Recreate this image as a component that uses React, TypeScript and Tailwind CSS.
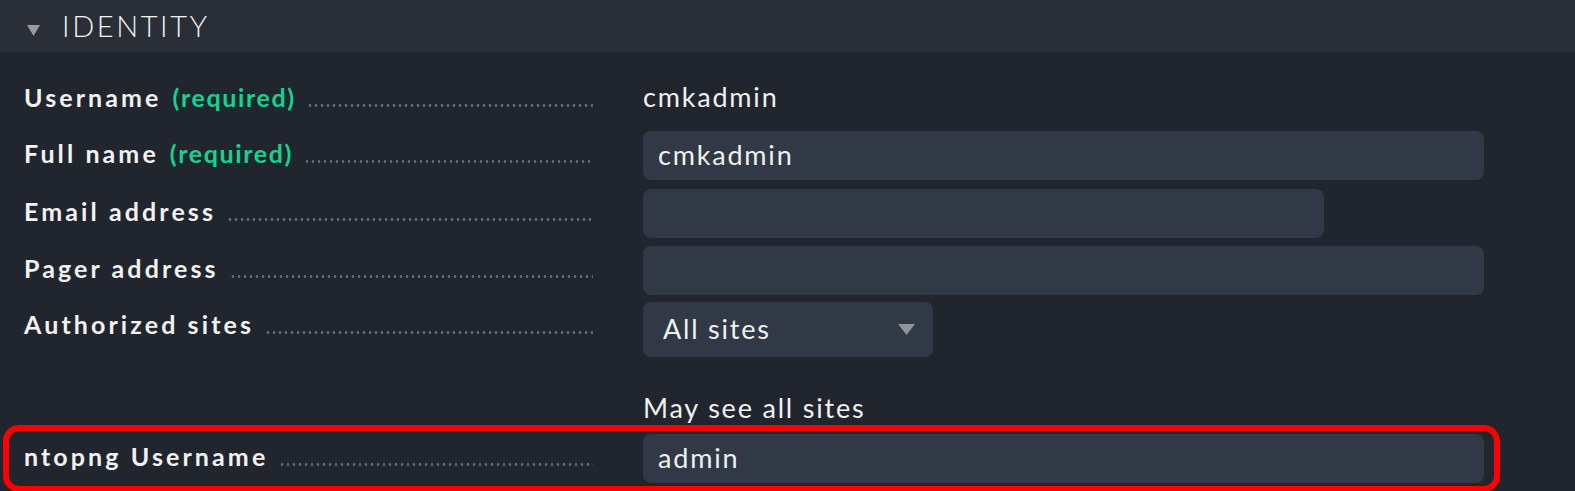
const DOTS =
  "flex-1 h-[3px] mt-[15px] ml-[11px] bg-[radial-gradient(circle,#60666f_1.2px,transparent_1.7px)] bg-[length:6px_3px] bg-repeat-x";

interface LabelProps {
  label: string;
  required?: boolean;
  indent?: string;
}

const Label = ({ label, required, indent = "pl-[24px] w-[643px]" }: LabelProps) => (
  <div className={`flex items-center h-[46px] pr-[50px] shrink-0 ${indent}`}>
    <span className="text-[25px] font-bold tracking-[3.1px] text-[#f2f2f2] whitespace-nowrap">{label}</span>
    {required && (
      <span className="ml-[11px] text-[25px] font-bold tracking-[1.6px] text-[#15d38c] whitespace-nowrap">
        (required)
      </span>
    )}
    <span className={DOTS} />
  </div>
);

const Input = ({ value = "", width = "w-[841px]" }: { value?: string; width?: string }) => (
  <div className={`h-[49px] ${width} rounded-[8px] bg-[#303945] flex items-center px-[15px]`}>
    <span className="text-[27px] tracking-[1.8px] text-[#f0f0f0]">{value}</span>
  </div>
);

export default function App() {
  return (
    <div className="w-[1575px] h-[491px] bg-[#21262e] overflow-hidden font-['Lato','Noto_Sans',sans-serif]">
      {/* Header */}
      <div className="h-[52px] bg-[#292e37] flex items-center pl-[27px]">
        <svg width="13" height="11" viewBox="0 0 13 11" className="mt-[8px]">
          <polygon points="0,0 13,0 6.5,11" fill="#9b9b9b" />
        </svg>
        <span className="ml-[22px] text-[29px] font-light tracking-[2.6px] text-[#f4f4f4]">IDENTITY</span>
      </div>

      <div className="flex flex-col pt-[23px]">
        {/* Username */}
        <div className="flex items-start h-[49px]">
          <Label label="Username" required />
          <span className="pt-[2px] text-[27px] tracking-[1.8px] text-[#f0f0f0]">cmkadmin</span>
        </div>

        <div className="flex items-start mt-[7px]">
          <Label label="Full name" required />
          <Input value="cmkadmin" />
        </div>

        <div className="flex items-start mt-[9px]">
          <Label label="Email address" />
          <Input width="w-[681px]" />
        </div>

        <div className="flex items-start mt-[8px]">
          <Label label="Pager address" />
          <Input />
        </div>

        <div className="flex items-start mt-[7px]">
          <Label label="Authorized sites" />
          <div className="flex flex-col">
            <div className="h-[55px] w-[290px] rounded-[8px] bg-[#303945] flex items-center justify-between pl-[20px] pr-[18px]">
              <span className="text-[27px] tracking-[1.8px] text-[#f0f0f0]">All sites</span>
              <svg width="17" height="11" viewBox="0 0 17 11">
                <polygon points="0,0 17,0 8.5,11" fill="#8f949b" />
              </svg>
            </div>
            <span className="mt-[36px] h-[30px] leading-[30px] text-[27px] tracking-[1.8px] text-[#f0f0f0]">
              May see all sites
            </span>
          </div>
        </div>

        {/* ntopng row, highlighted */}
        <div className="mt-[2px] ml-[3px] w-[1497px] border-[6px] border-[#ff0000] rounded-[16px] flex items-start py-[3px]">
          <Label label="ntopng Username" indent="pl-[15px] w-[634px]" />
          <Input value="admin" />
        </div>
      </div>
    </div>
  );
}
